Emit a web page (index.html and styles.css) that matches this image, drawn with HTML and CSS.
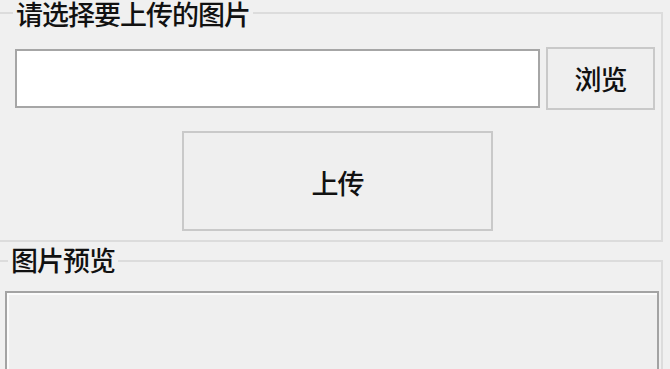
FILE: index.html
```html
<!DOCTYPE html>
<html lang="zh-CN">
<head>
<meta charset="utf-8">
<title>图片上传</title>
<link rel="stylesheet" href="styles.css">
</head>
<body>
<div class="group group-upload">
  <div class="caption caption-upload">请选择要上传的图片</div>
  <div class="file-row">
    <div class="textbox"></div>
    <div class="btn btn-browse">浏览</div>
  </div>
  <div class="btn btn-upload">上传</div>
</div>
<div class="group group-preview">
  <div class="caption caption-preview">图片预览</div>
  <div class="preview-box"></div>
</div>
</body>
</html>
```
FILE: styles.css
```css
* { box-sizing: border-box; }
html, body {
  margin: 0;
  padding: 0;
  background: #f0f0f0;
  overflow: hidden;
  width: 670px;
  height: 369px;
}
body {
  font-family: "Noto Sans CJK SC", "Noto Sans", sans-serif;
  font-size: 27px;
  font-weight: 500;
  color: #111;
}
.group {
  width: 667px;
  margin-left: -4px;
  border: 2px solid #dcdcdc;
}
.group-upload {
  margin-top: 12px;
  padding-bottom: 9px;
}
.group-preview {
  margin-top: 18px;
  height: 200px;
}
.caption {
  display: block;
  width: fit-content;
  line-height: 28px;
  height: 28px;
  margin-top: -14px;
  padding: 0 3px;
  background: #f0f0f0;
  letter-spacing: -1px;
}
.caption-upload { margin-left: 15px; }
.caption-preview { margin-left: 10px; margin-top: -16px; }
.file-row {
  display: flex;
  align-items: center;
  gap: 6px;
  margin-top: 19px;
  margin-left: 17px;
  height: 63px;
}
.textbox {
  width: 525px;
  height: 59px;
  background: #ffffff;
  border: 2px solid #a6a6a6;
}
.btn {
  display: flex;
  align-items: center;
  justify-content: center;
  background: #efefef;
  border: 2px solid #c9c9c9;
  letter-spacing: -1px;
  line-height: 1;
}
.btn-browse {
  width: 109px;
  height: 63px;
}
.btn-upload {
  width: 311px;
  height: 100px;
  margin-top: 21px;
  margin-left: 184px;
  padding-top: 2px;
}
.preview-box {
  width: 654px;
  height: 120px;
  margin-top: 17px;
  margin-left: 7px;
  border: 2px solid #a3a3a3;
  box-shadow: inset 2px 2px 0 #fbfbfb;
  background: #efefef;
}
```
